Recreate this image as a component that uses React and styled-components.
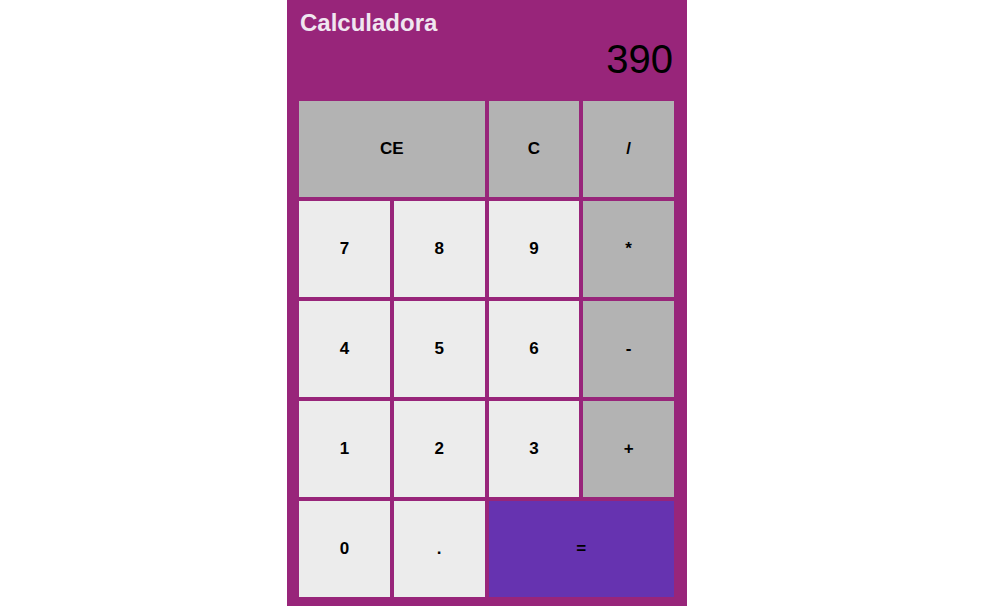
import styled, { createGlobalStyle } from "styled-components";

const GlobalStyle = createGlobalStyle`
    body {
        margin: 0;
        font-family: "Liberation Sans", Arial, sans-serif;
        background: #ffffff;
    }
`

const keys = [
    { label: "CE", kind: "op", span: 2 },
    { label: "C", kind: "op" },
    { label: "/", kind: "op" },
    { label: "7" }, { label: "8" }, { label: "9" }, { label: "*", kind: "op" },
    { label: "4" }, { label: "5" }, { label: "6" }, { label: "-", kind: "op" },
    { label: "1" }, { label: "2" }, { label: "3" }, { label: "+", kind: "op" },
    { label: "0" }, { label: "." }, { label: "=", kind: "eq", span: 2 },
];

const App = () => {
    return (
        <Page>
            <GlobalStyle />
            <Calculator>
                <Title>Calculadora</Title>
                <Display>390</Display>
                <Keypad>
                    {keys.map((key) => (
                        <Key key={key.label} $kind={key.kind} $span={key.span}>
                            {key.label}
                        </Key>
                    ))}
                </Keypad>
            </Calculator>
        </Page>
    )
}

const Page = styled.div`
    display: flex;
    justify-content: center;
    padding-right: 20px;
    min-height: 606px;
`

const Calculator = styled.div`
    width: 400px;
    box-sizing: border-box;
    background: #98257a;
    padding: 9px 13px 9px 12px;
    display: flex;
    flex-direction: column;
`

const Title = styled.h1`
    margin: 0 0 0 1px;
    font-size: 24px;
    font-weight: bold;
    color: #f0e6f0;
    line-height: 28px;
`

const Display = styled.div`
    text-align: right;
    font-size: 40px;
    color: #000;
    line-height: 44px;
    padding-right: 1px;
    margin-bottom: 20px;
`

const Keypad = styled.div`
    display: grid;
    grid-template-columns: repeat(4, 1fr);
    grid-auto-rows: 96px;
    gap: 4px;
`

const Key = styled.button`
    grid-column: span ${(p) => p.$span || 1};
    border: none;
    margin: 0;
    padding: 0;
    font-family: "Liberation Sans", Arial, sans-serif;
    font-weight: bold;
    font-size: 17px;
    color: #000;
    background: ${(p) => p.$kind === "op" ? "#b3b3b3" : p.$kind === "eq" ? "#6633b0" : "#ececec"};
`

export default App;
